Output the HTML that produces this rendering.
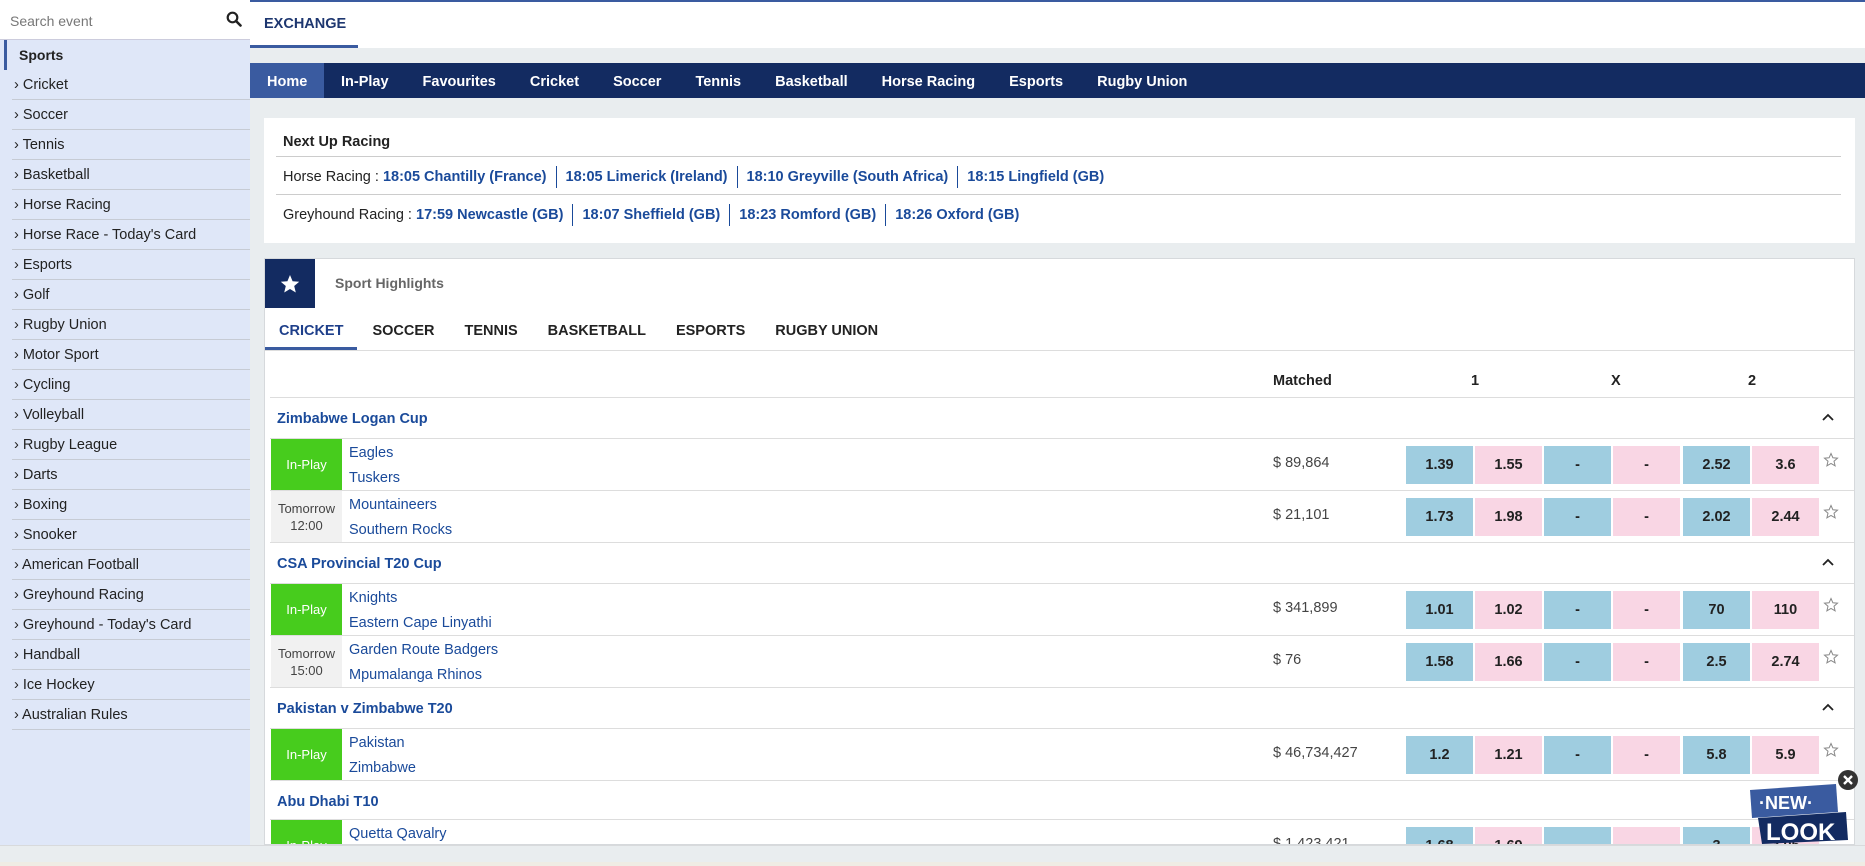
<!DOCTYPE html>
<html><head><meta charset="utf-8"><style>
*{box-sizing:border-box;margin:0;padding:0}
body{width:1865px;height:865px;overflow:hidden;font-family:"Liberation Sans",sans-serif;background:#e9edef;position:relative;color:#222;font-size:14px}
.top{position:absolute;left:0;top:0;width:1865px;height:2px;background:#3a5ba0}
.side{position:absolute;left:0;top:0;width:250px;height:845px;background:#dfe7f8}
.search{height:40px;background:#fff;border-bottom:1px solid #ccd;position:relative;padding:13px 10px;color:#777;font-size:14px}
.search svg{position:absolute;right:8px;top:11px}
.side .sp{height:30px;line-height:30px;padding-left:12px;font-weight:bold;border-left:3px solid #3a5ba0;margin-left:4px}
.side .it{height:30px;line-height:30px;margin-left:12px;border-bottom:1px solid #c6cbd4;padding-left:2px;font-size:14.5px;color:#222}
.hdr{position:absolute;left:250px;top:2px;width:1615px;height:46px;background:#fff}
.exch{position:absolute;left:0;top:0;width:108px;height:46px;border-bottom:3px solid #3a5ba0;color:#1e3770;font-weight:bold;font-size:14.5px;padding:14px 0 0 14px}
.nav{position:absolute;left:250px;top:63px;width:1615px;height:35px;background:#132b61;display:flex}
.nav div{color:#fff;font-weight:bold;font-size:14.5px;line-height:38px;padding:0 17px}
.nav .on{background:#3a5ba0;width:74px;padding:0 0 0 17px}
.box1{position:absolute;left:264px;top:118px;width:1591px;height:125px;background:#fff}
.box1 .t{position:absolute;left:19px;top:16px;font-weight:bold;font-size:14.5px}
.box1 .ln{position:absolute;left:12px;width:1565px;height:1px;background:#ccc}
.box1 .r{position:absolute;left:19px;font-size:14.5px;white-space:nowrap}
.box1 .r b{color:#1a4a9a}
.box1 .r i{display:inline-block;width:1px;height:22px;background:#1a4a9a;vertical-align:middle;margin:0 9px}
.box2{position:absolute;left:264px;top:258px;width:1591px;height:587px;background:#fff;border:1px solid #d6d9dc;overflow:hidden}
.star{position:absolute;left:0;top:0;width:50px;height:49px;background:#132b61}
.sh{position:absolute;left:70px;top:16px;color:#666;font-weight:bold;font-size:14px}
.tabs{position:absolute;left:0;top:57px;height:34px;display:flex;font-weight:bold;font-size:14.5px}
.tabs div{padding:0 15px;line-height:30px}
.tabs .on{color:#1e3f8a;border-bottom:3px solid #3a5ba0;padding:0 14px}
.tabsline{position:absolute;left:0;top:91px;width:1591px;height:1px;background:#ddd}
.tbl{position:absolute;left:5px;top:100px;width:1585px}
.hrow{height:39px;border-bottom:1px solid #ddd;position:relative;font-weight:bold;font-size:14.5px}
.hrow span{position:absolute;top:14px}
.lg{height:41px;border-bottom:1px solid #ddd;position:relative;color:#1a4a9a;font-weight:bold;font-size:14.5px}
.lg span{position:absolute;left:7px;top:13px}
.lg svg{position:absolute;left:1552px;top:15px}
.mr{height:52px;border-bottom:1px solid #ddd;position:relative}
.ip{position:absolute;left:1px;top:0;width:71px;height:51px;background:#47cc1d;color:#fff;font-size:13px;text-align:center;line-height:51px}
.tm{position:absolute;left:1px;top:0;width:71px;height:51px;background:#f1f1f1;color:#444;font-size:13px;text-align:center;padding-top:9px;line-height:17px}
.nm{position:absolute;left:79px;top:2px;color:#1a4a9a;font-size:14.5px;line-height:25px}
.mt{position:absolute;left:1003px;top:16px;color:#444;font-size:14.5px}
.od{position:absolute;top:7px;height:38px;width:67px;text-align:center;line-height:38px;font-weight:bold;font-size:14.5px}
.b{background:#9fcde0}.l{background:#f9d6e4}
.st{position:absolute;left:1553px;top:13px}
.bot{position:absolute;left:0;top:845px;width:1865px;height:20px;background:#e9edef;border-top:1px solid #d8dadc}
.bot:after{content:"";position:absolute;left:0;top:16px;width:1865px;height:4px;background:#efece4}
.nl{position:absolute;left:1746px;top:768px}
</style></head><body>
<div class="top"></div>
<div class="side">
<div class="search">Search event<svg width="16" height="16" viewBox="0 0 16 16"><circle cx="6.5" cy="6.5" r="4.8" fill="none" stroke="#222" stroke-width="2.2"/><path d="M10 10l4.5 4.5" stroke="#222" stroke-width="2.6" stroke-linecap="round"/></svg></div>
<div class="sp">Sports</div>
<div class="it">› Cricket</div><div class="it">› Soccer</div><div class="it">› Tennis</div><div class="it">› Basketball</div><div class="it">› Horse Racing</div><div class="it">› Horse Race - Today's Card</div><div class="it">› Esports</div><div class="it">› Golf</div><div class="it">› Rugby Union</div><div class="it">› Motor Sport</div><div class="it">› Cycling</div><div class="it">› Volleyball</div><div class="it">› Rugby League</div><div class="it">› Darts</div><div class="it">› Boxing</div><div class="it">› Snooker</div><div class="it">› American Football</div><div class="it">› Greyhound Racing</div><div class="it">› Greyhound - Today's Card</div><div class="it">› Handball</div><div class="it">› Ice Hockey</div><div class="it">› Australian Rules</div>
</div>
<div class="hdr"><div class="exch">EXCHANGE</div></div>
<div class="nav"><div class="on">Home</div><div>In-Play</div><div>Favourites</div><div>Cricket</div><div>Soccer</div><div>Tennis</div><div>Basketball</div><div>Horse Racing</div><div>Esports</div><div>Rugby Union</div></div>
<div class="box1">
<div class="t">Next Up Racing</div>
<div class="ln" style="top:38px"></div>
<div class="r" style="top:48px">Horse Racing : <b>18:05 Chantilly (France)</b><i></i><b>18:05 Limerick (Ireland)</b><i></i><b>18:10 Greyville (South Africa)</b><i></i><b>18:15 Lingfield (GB)</b></div>
<div class="ln" style="top:76px"></div>
<div class="r" style="top:86px">Greyhound Racing : <b>17:59 Newcastle (GB)</b><i></i><b>18:07 Sheffield (GB)</b><i></i><b>18:23 Romford (GB)</b><i></i><b>18:26 Oxford (GB)</b></div>
</div>
<div class="box2">
<div class="star"><svg width="50" height="49" viewBox="0 0 50 49"><path d="M25 16l2.6 6.2 6.6.5-5 4.3 1.6 6.5L25 30l-5.8 3.5 1.6-6.5-5-4.3 6.6-.5z" fill="#fff"/></svg></div>
<div class="sh">Sport Highlights</div>
<div class="tabs"><div class="on">CRICKET</div><div>SOCCER</div><div>TENNIS</div><div>BASKETBALL</div><div>ESPORTS</div><div>RUGBY UNION</div></div>
<div class="tabsline"></div>
<div class="tbl">
<div class="hrow"><span style="left:1003px">Matched</span><span style="left:1201px">1</span><span style="left:1341px">X</span><span style="left:1478px">2</span></div>

<div class="lg"><span>Zimbabwe Logan Cup</span><svg width="12" height="8"><path d="M1 7l5-5 5 5" fill="none" stroke="#222" stroke-width="1.8"/></svg></div>
<div class="mr"><div class="ip">In-Play</div><div class="nm">Eagles<br>Tuskers</div><div class="mt">$ 89,864</div>
<div class="od b" style="left:1136px">1.39</div><div class="od l" style="left:1205px">1.55</div><div class="od b" style="left:1274px">-</div><div class="od l" style="left:1343px">-</div><div class="od b" style="left:1413px">2.52</div><div class="od l" style="left:1482px">3.6</div><svg class="st" width="16" height="16" viewBox="0 0 16 16"><path d="M8 1.5l1.9 4.3 4.6.4-3.5 3 1.1 4.6L8 11.4l-4.1 2.4 1.1-4.6-3.5-3 4.6-.4z" fill="none" stroke="#888" stroke-width="1"/></svg></div>
<div class="mr"><div class="tm">Tomorrow<br>12:00</div><div class="nm">Mountaineers<br>Southern Rocks</div><div class="mt">$ 21,101</div>
<div class="od b" style="left:1136px">1.73</div><div class="od l" style="left:1205px">1.98</div><div class="od b" style="left:1274px">-</div><div class="od l" style="left:1343px">-</div><div class="od b" style="left:1413px">2.02</div><div class="od l" style="left:1482px">2.44</div><svg class="st" width="16" height="16" viewBox="0 0 16 16"><path d="M8 1.5l1.9 4.3 4.6.4-3.5 3 1.1 4.6L8 11.4l-4.1 2.4 1.1-4.6-3.5-3 4.6-.4z" fill="none" stroke="#888" stroke-width="1"/></svg></div>

<div class="lg"><span>CSA Provincial T20 Cup</span><svg width="12" height="8"><path d="M1 7l5-5 5 5" fill="none" stroke="#222" stroke-width="1.8"/></svg></div>
<div class="mr"><div class="ip">In-Play</div><div class="nm">Knights<br>Eastern Cape Linyathi</div><div class="mt">$ 341,899</div>
<div class="od b" style="left:1136px">1.01</div><div class="od l" style="left:1205px">1.02</div><div class="od b" style="left:1274px">-</div><div class="od l" style="left:1343px">-</div><div class="od b" style="left:1413px">70</div><div class="od l" style="left:1482px">110</div><svg class="st" width="16" height="16" viewBox="0 0 16 16"><path d="M8 1.5l1.9 4.3 4.6.4-3.5 3 1.1 4.6L8 11.4l-4.1 2.4 1.1-4.6-3.5-3 4.6-.4z" fill="none" stroke="#888" stroke-width="1"/></svg></div>
<div class="mr"><div class="tm">Tomorrow<br>15:00</div><div class="nm">Garden Route Badgers<br>Mpumalanga Rhinos</div><div class="mt">$ 76</div>
<div class="od b" style="left:1136px">1.58</div><div class="od l" style="left:1205px">1.66</div><div class="od b" style="left:1274px">-</div><div class="od l" style="left:1343px">-</div><div class="od b" style="left:1413px">2.5</div><div class="od l" style="left:1482px">2.74</div><svg class="st" width="16" height="16" viewBox="0 0 16 16"><path d="M8 1.5l1.9 4.3 4.6.4-3.5 3 1.1 4.6L8 11.4l-4.1 2.4 1.1-4.6-3.5-3 4.6-.4z" fill="none" stroke="#888" stroke-width="1"/></svg></div>

<div class="lg"><span>Pakistan v Zimbabwe T20</span><svg width="12" height="8"><path d="M1 7l5-5 5 5" fill="none" stroke="#222" stroke-width="1.8"/></svg></div>
<div class="mr"><div class="ip">In-Play</div><div class="nm">Pakistan<br>Zimbabwe</div><div class="mt">$ 46,734,427</div>
<div class="od b" style="left:1136px">1.2</div><div class="od l" style="left:1205px">1.21</div><div class="od b" style="left:1274px">-</div><div class="od l" style="left:1343px">-</div><div class="od b" style="left:1413px">5.8</div><div class="od l" style="left:1482px">5.9</div><svg class="st" width="16" height="16" viewBox="0 0 16 16"><path d="M8 1.5l1.9 4.3 4.6.4-3.5 3 1.1 4.6L8 11.4l-4.1 2.4 1.1-4.6-3.5-3 4.6-.4z" fill="none" stroke="#888" stroke-width="1"/></svg></div>

<div class="lg" style="height:39px"><span>Abu Dhabi T10</span></div>
<div class="mr"><div class="ip">In-Play</div><div class="nm">Quetta Qavalry<br>Northern Warriors</div><div class="mt">$ 1,423,421</div>
<div class="od b" style="left:1136px">1.68</div><div class="od l" style="left:1205px">1.69</div><div class="od b" style="left:1274px">-</div><div class="od l" style="left:1343px">-</div><div class="od b" style="left:1413px">3</div><div class="od l" style="left:1482px">3.05</div></div>
</div>
</div>
<div class="bot"></div>
<svg class="nl" width="114" height="80" viewBox="0 0 114 80">
<path d="M4 22l86-6 2 28-86 6z" fill="#3a5ba0"/>
<text x="13" y="41" font-family="Liberation Sans" font-weight="bold" font-size="18" fill="#fff">·NEW·</text>
<path d="M12 50l88-6 2 28-86 4z" fill="#132b61"/>
<text x="20" y="72" font-family="Liberation Sans" font-weight="bold" font-size="24" fill="#fff">LOOK</text>
<circle cx="102" cy="12" r="10" fill="#333"/>
<path d="M98 8l8 8M106 8l-8 8" stroke="#fff" stroke-width="2.4"/>
</svg>
</body></html>
